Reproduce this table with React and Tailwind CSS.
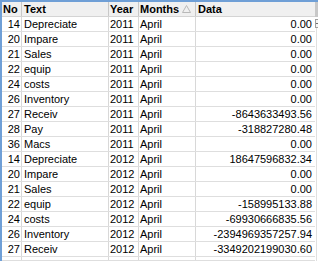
const rows = [
  ["14", "Depreciate", "2011", "April", "0.00"],
  ["20", "Impare", "2011", "April", "0.00"],
  ["21", "Sales", "2011", "April", "0.00"],
  ["22", "equip", "2011", "April", "0.00"],
  ["24", "costs", "2011", "April", "0.00"],
  ["26", "Inventory", "2011", "April", "0.00"],
  ["27", "Receiv", "2011", "April", "-8643633493.56"],
  ["28", "Pay", "2011", "April", "-318827280.48"],
  ["36", "Macs", "2011", "April", "0.00"],
  ["14", "Depreciate", "2012", "April", "18647596832.34"],
  ["20", "Impare", "2012", "April", "0.00"],
  ["21", "Sales", "2012", "April", "0.00"],
  ["22", "equip", "2012", "April", "-158995133.88"],
  ["24", "costs", "2012", "April", "-69930666835.56"],
  ["26", "Inventory", "2012", "April", "-2394969357257.94"],
  ["27", "Receiv", "2012", "April", "-3349202199030.60"],
  ["", "", "", "", ""],
];

const cols = "grid grid-cols-[20px_87px_30px_57px_119px]";

export default function App() {
  return (
    <div
      className="w-[318px] h-[261px] overflow-hidden bg-white text-[11px] leading-[14px] text-black"
      style={{ fontFamily: "Tahoma, 'Liberation Sans', sans-serif" }}
    >
      <div className="flex h-full border-t-2 border-[#6f9fd6]">
        <div className="w-[2px] bg-[#6f9fd6] shrink-0" />
        <div className="flex-1 flex flex-col">
          {/* header */}
          <div className={`${cols} h-[15px] bg-[#f0f0f0] border-b border-[#d4d4d4] font-bold`}>
            <div className="px-[1px] border-r border-[#c8c8c8]">No</div>
            <div className="pl-[2px] border-r border-[#c8c8c8]">Text</div>
            <div className="pl-[1px] border-r border-[#c8c8c8]">Year</div>
            <div className="pl-[1px] border-r border-[#c8c8c8] flex items-center">
              <span>Months</span>
              <svg width="9" height="8" viewBox="0 0 9 8" className="ml-[3px]">
                <path d="M0.5 7.5 L4.5 0.5 L8.5 7.5 Z" fill="none" stroke="#b8b8b8" strokeWidth="1" />
              </svg>
            </div>
            <div className="pl-[2px]">Data</div>
          </div>
          {rows.map((r, i) => (
            <div key={i} className={`${cols} h-[15px] border-b border-[#dedede]`}>
              <div className="pr-[1px] text-right border-r border-[#d8d8d8]">{r[0]}</div>
              <div className="pl-[2px] border-r border-[#d8d8d8]">{r[1]}</div>
              <div className="pl-[1px] border-r border-[#d8d8d8]">{r[2]}</div>
              <div className="pl-[1px] border-r border-[#d8d8d8]">{r[3]}</div>
              <div className="pr-[3px] text-right">{r[4]}</div>
            </div>
          ))}
        </div>
        <div className="w-[5px] shrink-0 flex flex-col">
          <div className="h-[15px] bg-[#c8c8c8]" />
          <div className="mt-[2px] h-[9px] border border-[#a0a0a0] bg-[#f4f4f4] flex items-center">
            <div className="w-[3px] h-[1px] bg-[#707070]" />
          </div>
          <div className="flex-1 border-l border-[#e0e0e0] ml-[1px]" />
        </div>
      </div>
    </div>
  );
}
